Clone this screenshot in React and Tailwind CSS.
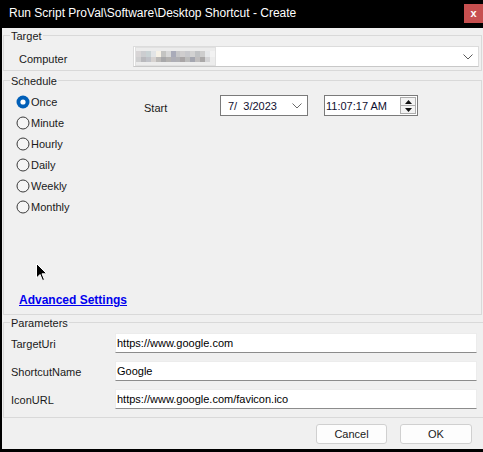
import React from "react";

function Radio({ checked, label }) {
  return (
    <div className="h-[21px] flex items-center">
      <svg width="14" height="14" viewBox="0 0 14 14" className="shrink-0">
        {checked ? (
          <>
            <circle cx="7" cy="7" r="6.5" fill="#005fb8" />
            <circle cx="7" cy="7" r="2.6" fill="#ffffff" />
          </>
        ) : (
          <circle cx="7" cy="7" r="6" fill="#f5f5f5" stroke="#3a3a3a" strokeWidth="1" />
        )}
      </svg>
      <span className="ml-[1px] pt-[1px]">{label}</span>
    </div>
  );
}

const mosaicTop = ["#d8d5d6", "#cccdd0", "#c9d2d4", "#e2e4e6", "#f6f1e6", "#c4c4c2", "#d8d8d8", "#a9abb9", "#c6c6c8", "#cfcdce", "#c8c8cc", "#d2d2d2", "#c0c2c4", "#cdcdcd", "#e6e8ea", "#f2f2f2"];
const mosaicBot = ["#cfcfd0", "#b9b9bd", "#c0c2c8", "#d6d2d0", "#bcbab8", "#a8a8aa", "#b4b2b0", "#aeaeb6", "#b0b0b4", "#a9a5a6", "#bcbcbc", "#a4a6b0", "#c0bebe", "#aaa8a8", "#d4d4d6", "#ececec"];

function Field({ label, value }) {
  return (
    <div className="flex items-center h-[20px]">
      <div className="w-[104px] leading-[13px] pt-[3px]">{label}</div>
      <div className="flex-1 h-[20px] bg-white border border-[#ececec] border-b-[#8c8c8c] pl-[1px] flex items-center leading-[13px] text-black">
        {value}
      </div>
    </div>
  );
}

export default function App() {
  return (
    <div
      className="w-[483px] h-[452px] bg-black flex flex-col text-[11px] text-[#1a1a1a] overflow-hidden"
      style={{ fontFamily: '"Liberation Sans", Arial, sans-serif' }}
    >
      {/* Title bar */}
      <div className="h-[28px] flex items-start shrink-0">
        <div className="pl-[9px] pt-[6px] text-white text-[12px] leading-[14px] flex-1 whitespace-nowrap">
          Run Script ProVal\Software\Desktop Shortcut - Create
        </div>
        <div className="mt-[4px] w-[19px] h-[19px] bg-[#c75050] text-white flex items-center justify-center text-[11px] font-bold leading-none">
          x
        </div>
      </div>

      {/* Body */}
      <div className="ml-[2px] h-[421px] bg-[#f0f0f0] flex flex-col relative">
        {/* Target */}
        <fieldset className="ml-[1px] w-[479px] border border-[#d9d9d9]">
          <legend className="ml-[6px] px-[1px] leading-[14px] pt-[1px]">Target</legend>
          <div className="flex items-center pt-[3px] pb-[3px] pl-[15px] pr-[2px]">
            <div className="w-[114px] leading-[13px] pt-[6px]">Computer</div>
            <div className="flex-1 h-[21px] bg-white border border-[#dcdcdc] border-b-[#c8c8c8] flex items-center relative">
              <div className="ml-[1px] w-[81px] h-[19px] bg-[#ececec] border border-[#e0e0e0] flex flex-col justify-center">
                <div className="flex">
                  {mosaicTop.map((c, i) => (
                    <div key={i} className="w-[5px] h-[6px]" style={{ backgroundColor: c }} />
                  ))}
                </div>
                <div className="flex">
                  {mosaicBot.map((c, i) => (
                    <div key={i} className="w-[5px] h-[5px]" style={{ backgroundColor: c }} />
                  ))}
                </div>
              </div>
              <div className="flex-1" />
              <svg width="10" height="6" viewBox="0 0 10 6" className="mr-[5px]">
                <path d="M0.5 0.5 L5 5 L9.5 0.5" fill="none" stroke="#5a5a5a" strokeWidth="1" />
              </svg>
            </div>
          </div>
        </fieldset>

        {/* Schedule */}
        <fieldset className="ml-[1px] mt-[2px] w-[479px] border border-[#d9d9d9]">
          <legend className="ml-[6px] px-[1px] leading-[14px] pt-[1px]">Schedule</legend>
          <div className="h-[226px] flex flex-col">
            <div className="flex pt-[3px]">
              <div className="pl-[12px] w-[140px] flex flex-col">
                <Radio checked label="Once" />
                <Radio label="Minute" />
                <Radio label="Hourly" />
                <Radio label="Daily" />
                <Radio label="Weekly" />
                <Radio label="Monthly" />
              </div>
              <div className="w-[76px] pt-[11px] leading-[13px]">Start</div>
              <div className="pt-[4px] flex gap-[16px]">
                <div className="w-[88px] h-[21px] bg-white border border-[#7a7a7a] flex items-center">
                  <span className="pl-[7px] pt-[1px] text-[#101030] whitespace-pre">7/  3/2023</span>
                  <div className="flex-1" />
                  <svg width="10" height="6" viewBox="0 0 10 6" className="mr-[5px]">
                    <path d="M0.5 0.5 L5 5 L9.5 0.5" fill="none" stroke="#6a6a6a" strokeWidth="1" />
                  </svg>
                </div>
                <div className="w-[94px] h-[21px] bg-white border border-[#7a7a7a] flex items-center">
                  <span className="pl-[1px] pt-[1px] text-[#101030]">11:07:17 AM</span>
                  <div className="flex-1" />
                  <div className="mr-[1px] w-[16px] h-[17px] flex flex-col border border-[#adadad]">
                    <div className="flex-1 bg-[#f3f3f3] border-b border-[#adadad] flex items-center justify-center">
                      <svg width="7" height="4" viewBox="0 0 7 4"><path d="M0 4 L3.5 0 L7 4 Z" fill="#111" /></svg>
                    </div>
                    <div className="flex-1 bg-[#f3f3f3] flex items-center justify-center">
                      <svg width="7" height="4" viewBox="0 0 7 4"><path d="M0 0 L3.5 4 L7 0 Z" fill="#111" /></svg>
                    </div>
                  </div>
                </div>
              </div>
            </div>
            <div className="mt-auto mb-[7px] pl-[15px] leading-[13px] text-[12px]">
              <span className="font-bold text-[#0000ee] underline">Advanced Settings</span>
            </div>
          </div>
        </fieldset>

        {/* Parameters */}
        <fieldset className="ml-[1px] border border-r-0 border-[#d9d9d9]">
          <legend className="ml-[6px] px-[1px] leading-[14px] pt-[1px]">Parameters</legend>
          <div className="pt-[3px] pb-[8px] pl-[7px] pr-[6px] flex flex-col gap-[8px]">
            <Field label="TargetUri" value="https://www.google.com" />
            <Field label="ShortcutName" value="Google" />
            <Field label="IconURL" value="https://www.google.com/favicon.ico" />
          </div>
        </fieldset>

        {/* Buttons */}
        <div className="mt-[6px] flex justify-end gap-[13px] pr-[11px]">
          <div className="w-[71px] h-[20px] bg-[#fdfdfd] border border-[#d0d0d0] rounded-[3px] flex items-center justify-center leading-none pt-[1px]">
            Cancel
          </div>
          <div className="w-[72px] h-[20px] bg-[#fdfdfd] border border-[#d0d0d0] rounded-[3px] flex items-center justify-center leading-none pt-[1px]">
            OK
          </div>
        </div>

        {/* mouse cursor */}
        <svg
          className="absolute left-[34px] top-[235px]"
          width="12"
          height="19"
          viewBox="0 0 12 19"
        >
          <path
            d="M0.5 0.5 L0.5 15 L4 11.5 L6.5 17.5 L8.5 16.7 L6 10.8 L10.8 10.8 Z"
            fill="#000"
            stroke="#fff"
            strokeWidth="1"
          />
        </svg>
      </div>
    </div>
  );
}
